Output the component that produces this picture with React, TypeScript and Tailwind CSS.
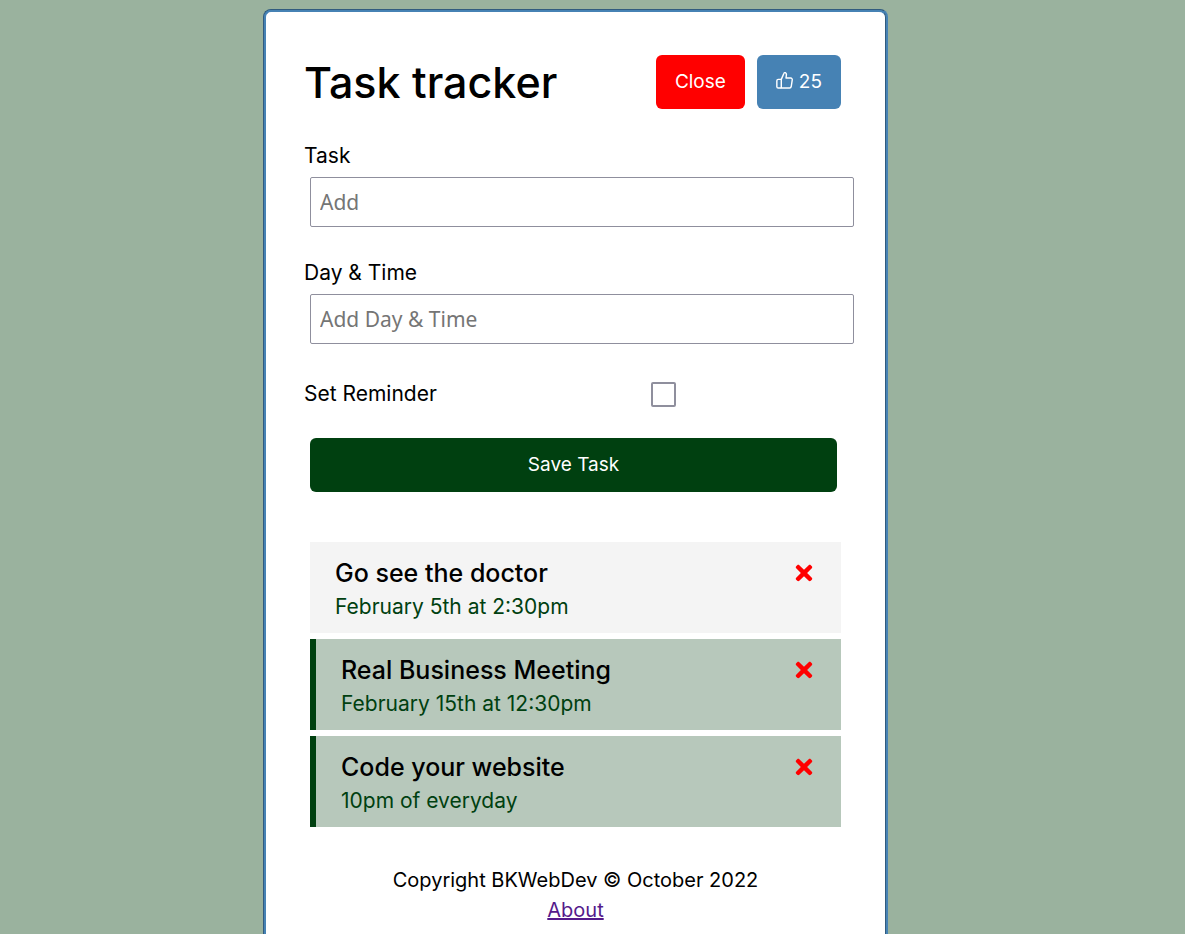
import { useState } from "react";
import { FaTimes } from "react-icons/fa";

type Task = { id: number; text: string; day: string; reminder: boolean };

const initialTasks: Task[] = [
  { id: 1, text: "Go see the doctor", day: "February 5th at 2:30pm", reminder: false },
  { id: 2, text: "Real Business Meeting", day: "February 15th at 12:30pm", reminder: true },
  { id: 3, text: "Code your website", day: "10pm of everyday", reminder: true },
];

const field =
  "ml-1.5 -mr-[7px] h-[50px] rounded-xs border border-[#8f8f9d] bg-white px-[9px] font-['Noto_Sans',sans-serif] text-[21px] placeholder:text-[#757575]";

function LikeIcon() {
  return (
    <svg
      viewBox="0 0 18 18"
      className="mb-1 size-[17px]"
      fill="none"
      stroke="currentColor"
      strokeWidth="1.5"
      strokeLinejoin="round"
      aria-hidden="true"
    >
      <path d="M5.6 7.8 8.3 1.5C8.6.5 9.9.5 10.4 1.1c.5.5.7 1.3.6 2.1l-.4 3.2h5a1.6 1.6 0 0 1 1.6 1.9l-1.1 7.3a1.7 1.7 0 0 1-1.7 1.4H5.6z" />
      <path d="M5.6 7.8H2.4A1.5 1.5 0 0 0 .9 9.3v6.2A1.5 1.5 0 0 0 2.4 17h3.2" />
    </svg>
  );
}

function TaskRow({ task, onDelete }: { task: Task; onDelete: () => void }) {
  return (
    <li
      className={
        task.reminder
          ? "border-l-6 border-[#004010] bg-[#b7c8bb] px-[25px] pt-4 pb-3"
          : "bg-[#f4f4f4] px-[25px] pt-4 pb-3"
      }
    >
      <div className="flex items-center justify-between">
        <h2 className="text-[25px] leading-[30px] font-medium">{task.text}</h2>
        <button type="button" aria-label={`Delete ${task.text}`} onClick={onDelete}>
          <FaTimes className="size-6 text-[#ff0000]" />
        </button>
      </div>
      <p className="mt-1 text-[21px] leading-[29px] text-[#004010]">{task.day}</p>
    </li>
  );
}

export default function App() {
  const [tasks, setTasks] = useState(initialTasks);
  const [likes, setLikes] = useState(25);

  return (
    <div className="min-h-screen bg-[#9ab29e] py-[9px] pr-[34px] font-['Inter',sans-serif] text-[21px] leading-[30px] text-black">
      <div className="mx-auto max-w-[625px] rounded-lg border-t border-r-2 border-b-2 border-l border-t-[#315b7e] border-r-[#4682b4] border-b-[#4682b4] border-l-[#315b7e] bg-[#4682b4]">
        <main className="rounded-[7px] border-t-2 border-r border-b border-l-2 border-t-[#4682b4] border-r-[#315b7e] border-b-[#315b7e] border-l-[#4682b4] bg-white px-[38px] pt-[43px] pb-[38px]">
          <header className="mr-1.5 flex items-center justify-between">
            <h1 className="text-[43px] leading-[54px] font-medium">Task tracker</h1>
            <div className="flex gap-3 text-[19px] text-white">
              <button type="button" className="h-[54px] rounded-md bg-[#ff0000] px-[19px]">
                Close
              </button>
              <button
                type="button"
                onClick={() => setLikes(likes + 1)}
                className="flex h-[54px] items-center gap-1.5 rounded-md bg-[#4682b4] px-[19px]"
              >
                <LikeIcon />
                {likes}
              </button>
            </div>
          </header>

          <form className="mt-8" onSubmit={(e) => e.preventDefault()}>
            <div className="flex flex-col gap-1.5">
              <label htmlFor="task">Task</label>
              <input id="task" type="text" placeholder="Add" className={field} />
            </div>
            <div className="mt-[31px] flex flex-col gap-1.5">
              <label htmlFor="day">Day &amp; Time</label>
              <input id="day" type="text" placeholder="Add Day &amp; Time" className={field} />
            </div>
            <div className="mt-[35px] flex items-center">
              <label htmlFor="reminder" className="w-44">
                Set Reminder
              </label>
              <div className="flex flex-1 justify-center">
                <input
                  id="reminder"
                  type="checkbox"
                  className="size-[25px] appearance-none rounded-xs border-2 border-[#8f8f9d] bg-white checked:bg-[#4682b4]"
                />
              </div>
            </div>
            <div className="mt-[29px] mr-2.5 ml-1.5">
              <button type="submit" className="h-[54px] w-full rounded-md bg-[#004010] text-[19px] text-white">
                Save Task
              </button>
            </div>
          </form>

          <ul className="mx-1.5 mt-[50px] flex flex-col gap-1.5">
            {tasks.map((task) => (
              <TaskRow
                key={task.id}
                task={task}
                onDelete={() => setTasks(tasks.filter((t) => t.id !== task.id))}
              />
            ))}
          </ul>

          <footer className="mt-[38px] text-center text-[20px] leading-[30px]">
            <p>Copyright BKWebDev © October 2022</p>
            <a href="#about" className="text-[#551a8b] underline">
              About
            </a>
          </footer>
        </main>
      </div>
    </div>
  );
}
